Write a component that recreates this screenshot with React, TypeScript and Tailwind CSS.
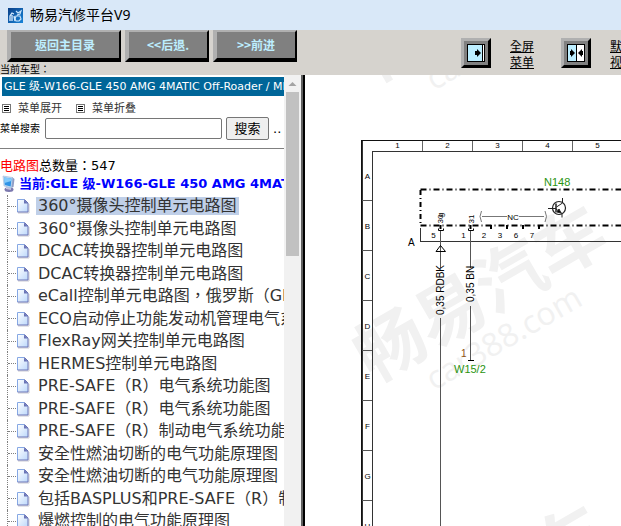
import React from "react";

const tree = [
  "360°摄像头控制单元电路图",
  "360°摄像头控制单元电路图",
  "DCAC转换器控制单元电路图",
  "DCAC转换器控制单元电路图",
  "eCall控制单元电路图，俄罗斯（GLE）",
  "ECO启动停止功能发动机管理电气系统功能图",
  "FlexRay网关控制单元电路图",
  "HERMES控制单元电路图",
  "PRE-SAFE（R）电气系统功能图",
  "PRE-SAFE（R）电气系统功能图",
  "PRE-SAFE（R）制动电气系统功能图",
  "安全性燃油切断的电气功能原理图",
  "安全性燃油切断的电气功能原理图",
  "包括BASPLUS和PRE-SAFE（R）制动",
  "爆燃控制的电气功能原理图",
];

function AppIcon() {
  return (
    <svg width="15" height="15" viewBox="0 0 15 15" aria-hidden="true">
      <defs>
        <linearGradient id="app" x1="0" y1="0" x2="1" y2="1">
          <stop offset="0" stopColor="#0a3f87" />
          <stop offset="1" stopColor="#1683d8" />
        </linearGradient>
      </defs>
      <rect width="15" height="15" fill="url(#app)" />
      <path d="M2 13V8l2-3 2 1M4 7v6M6 8l1 5" fill="none" stroke="#d8ecff" strokeWidth="1.3" />
      <path d="M8 3l2 2 3-2-1 3-3 1M8 8h4l1 3-2 2H8l-1-2z" fill="none" stroke="#c5e2fb" strokeWidth="1.2" />
    </svg>
  );
}

function ListIcon() {
  return (
    <svg width="9" height="9" viewBox="0 0 9 9" shapeRendering="crispEdges" aria-hidden="true">
      <rect x="0.5" y="0.5" width="8" height="8" fill="#fff" stroke="#777" />
      <path d="M2 2.5h5M2 4.5h5M2 6.5h5" stroke="#000" />
    </svg>
  );
}

function ComputerIcon() {
  return (
    <svg width="16" height="18" viewBox="0 0 16 18" className="shrink-0" aria-hidden="true">
      <ellipse cx="9" cy="14.500" rx="4.500" ry="2.500" fill="#7c79ae" />
      <path d="M6 11l5 1v3l-5-1z" fill="#c4c3de" />
      <path d="M12 2l2.500 2-1 8-3 1z" fill="#8f9cc4" />
      <path d="M3 1l9.500 1.500-1 10.500L4 11z" fill="#c3dcf2" stroke="#9fb9da" strokeWidth=".6" />
      <path d="M4 2.500l7.500 1-.8 8L4.800 10z" fill="#2f93e6" />
      <path d="M4 2.500l7.500 1-.2 2.500L4.400 8z" fill="#84cbfb" />
    </svg>
  );
}

function PageIcon() {
  return (
    <svg width="14" height="16" viewBox="0 0 14 16" className="shrink-0" aria-hidden="true">
      <defs>
        <linearGradient id="sheet" x1="0" y1="0" x2="1" y2="1">
          <stop offset="0" stopColor="#ffffff" />
          <stop offset="1" stopColor="#bcd8fb" />
        </linearGradient>
      </defs>
      <path d="M2 15h11V6" fill="none" stroke="#c9c9d2" />
      <path d="M1.500 1.500h7l3.500 3.500v9H1.500z" fill="url(#sheet)" />
      <path d="M1.500 14V1.500h7" fill="none" stroke="#86a8e4" />
      <path d="M8.500 1.500L12 5v9H1.500" fill="none" stroke="#6a74b6" />
      <path d="M8 1.500V5.500h4z" fill="#6a74b6" />
    </svg>
  );
}

function FullMenuIcon() {
  return (
    <svg width="18" height="18" viewBox="0 0 18 18" aria-hidden="true">
      <rect x="0.500" y="0.500" width="17" height="17" fill="#bdeeff" stroke="#000" />
      <path d="M16 1h1v16h-1z" fill="#fff" />
      <path d="M15.500 1v16" stroke="#000" />
      <path d="M8 7h2V5l4 4-4 4v-2H8z" fill="#000" />
    </svg>
  );
}

function SplitIcon() {
  return (
    <svg width="18" height="18" viewBox="0 0 18 18" aria-hidden="true">
      <rect x="0.500" y="0.500" width="17" height="17" fill="#fff" stroke="#000" />
      <path d="M1 1h8v16H1z" fill="#bdeeff" />
      <path d="M9.500 1v16" stroke="#000" />
      <path d="M3 7h1V5l4 4-4 4v-2H3zM16 7h-1V5l-4 4 4 4v-2h1z" fill="#000" />
    </svg>
  );
}

const navButton =
  "h-8 border-t-2 border-r-2 border-b-4 border-l-4 border-t-[#b0b0b0] border-l-[#b0b0b0] border-r-black border-b-black bg-[#808080] text-xs font-bold text-[#bdeeff]";
const iconButton =
  "flex size-[30px] shrink-0 items-center justify-center border-3 border-t-[#b0b0b0] border-l-[#b0b0b0] border-r-black border-b-black bg-[#808080]";

function Watermark({ y }: { y: number }) {
  return (
    <g transform={`translate(0 ${y})`} fill="#f1f1f1">
      <text transform="translate(373 384) rotate(-30)" fontSize="69" fontWeight="700" fontFamily="'Noto Sans CJK SC', sans-serif">
        畅易汽车
      </text>
      <text transform="translate(434 391) rotate(-30)" fontSize="32" fontFamily="'Open Sans', sans-serif">
        car388.com
      </text>
    </g>
  );
}

function Diagram() {
  const rows = ["A", "B", "C", "D", "E", "F", "G", "H", "I", "K"];
  const cols = [1, 2, 3, 4, 5, 6, 7, 8];
  return (
    <svg width="500" height="600" viewBox="305 75 500 600" className="block max-w-none" fontFamily="'Liberation Sans', Arial, sans-serif">
      <Watermark y={-300} />
      <Watermark y={0} />
      <Watermark y={300} />
      <g fill="none" shapeRendering="crispEdges">
        <path d="M362.500 660V140.500H800" stroke="#333" strokeWidth="1" />
        <path d="M361.500 660V140.500H800" stroke="#111" strokeWidth="1" />
        <path d="M372.500 660V151.500H800" stroke="#333" />
        {cols.map((c) => (
          <path key={c} d={`M${372.5 + c * 50} 141v10`} stroke="#666" />
        ))}
        {rows.map((r, i) => (
          <path key={r} d={`M362 ${200.5 + i * 50}h10`} stroke="#555" />
        ))}
      </g>
      <g fontSize="8" textAnchor="middle">
        {cols.map((c) => (
          <text key={c} x={347.5 + c * 50} y="148">{c}</text>
        ))}
        {rows.map((r, i) => (
          <text key={r} x="367.500" y={179 + i * 50}>{r}</text>
        ))}
      </g>
      <path d="M420.500 189.500H800" stroke="#000" strokeWidth="2" strokeDasharray="6 3 1 3" fill="none" />
      <path d="M420.500 225.500H800" stroke="#000" strokeWidth="2" strokeDasharray="6 3 1 3" fill="none" />
      <path d="M420.500 190v35" stroke="#000" strokeWidth="2" strokeDasharray="5 3 1 3" fill="none" />
      <path d="M420.500 228v13.500H800" stroke="#333" fill="none" shapeRendering="crispEdges" />
      <text x="408" y="246" fontSize="10">A</text>

      <g fill="none" stroke="#555" shapeRendering="crispEdges">
        <path d="M440.500 230v38M440.500 318v342M470.500 230v38M470.500 306v54" />
      </g>
      <g fill="none" stroke="#000">
        <path d="M438.500 228.500v2h5v-2M468.500 228.500v2h5v-2" />
        <path d="M440.500 225v4M470.500 225v4M491 225v4M507 225v4M523 225v4M539 225v4" strokeWidth="2" />
        <path d="M436 251.500L440.500 245.500L445.500 251.500Z" />
        <path d="M468 360.500h6" />
      </g>
      <g fontSize="8" textAnchor="middle">
        <text transform="translate(443 219) rotate(-90)">30</text>
        <text transform="translate(443 215) rotate(-90)">g</text>
        <text transform="translate(474 219) rotate(-90)">31</text>
        <text x="433.500" y="238">5</text>
        <text x="463.500" y="238">1</text>
        <text x="484" y="238">2</text>
        <text x="500" y="238">3</text>
        <text x="516" y="238">6</text>
        <text x="532" y="238">7</text>
        <text x="513" y="220">NC</text>
      </g>
      <g fill="none" stroke="#777">
        <path d="M481.500 211q-3 5.500 0 11M545 211q3 5.500 0 11" />
        <path d="M482 216.500h25M519 216.500h25" />
      </g>
      <g fill="none" stroke="#222">
        <circle cx="559" cy="208" r="6.500" strokeWidth="1.200" />
        <path d="M548 208.500h8M562.500 198v5l-6 4M556 209l6 4.500v4" />
        <path d="M556 203.500v9" strokeWidth="1.500" />
        <path d="M561 213l-4-1 2-3z" fill="#000" />
      </g>

      <g fontSize="10">
        <text transform="translate(444 315) rotate(-90)">0,35 RDBK</text>
        <text transform="translate(474 302) rotate(-90)">0,35 BN</text>
      </g>
      <g fontSize="11" fill="#2a9410">
        <text x="544" y="186">N148</text>
        <text x="454" y="373">W15/2</text>
        <text x="461" y="357" fontSize="10" fill="#8f5210">1</text>
      </g>
    </svg>
  );
}

export default function App() {
  return (
    <div className="flex h-screen flex-col overflow-hidden bg-white font-['DejaVu_Sans','Noto_Sans_CJK_TC',sans-serif] text-black">
      <header className="flex h-[30px] shrink-0 items-center gap-[7px] bg-[#d9e8f8] pl-2">
        <AppIcon />
        <h1 className="font-['Noto_Sans','Noto_Sans_CJK_SC',sans-serif] text-sm leading-5">畅易汽修平台V9</h1>
      </header>

      <div className="flex h-[45px] shrink-0 overflow-hidden bg-[#d6d3ce] font-['Noto_Sans_CJK_TC',sans-serif]">
        <div className="w-[461px] shrink-0">
          <div className="flex gap-1 pl-[7px]">
            <button type="button" className={navButton + " w-[114px]"}>返回主目录</button>
            <button type="button" className={navButton + " w-[84px]"}>&lt;&lt;后退.</button>
            <button type="button" className={navButton + " w-[84px]"}>&gt;&gt;前进</button>
          </div>
          <p className="text-[10px] leading-[13px]">当前车型：</p>
        </div>
        <div className="flex shrink-0 gap-[19px] pt-2">
          <button type="button" aria-label="全屏菜单" className={iconButton}><FullMenuIcon /></button>
          <a href="#menu" className="w-8 text-xs leading-4 underline">全屏<br />菜单</a>
          <button type="button" aria-label="默认视图" className={iconButton}><SplitIcon /></button>
          <a href="#view" className="w-8 text-xs leading-4 underline">默认<br />视图</a>
        </div>
      </div>

      <div className="flex min-h-0 flex-1">
        <aside className="flex w-[305px] shrink-0 border-r-2 border-black">
          <div className="min-w-0 flex-1 overflow-hidden whitespace-nowrap">
            <div className="mt-0.5 ml-0.5 h-[19px] overflow-hidden bg-[#006699] pl-0.5 text-[11px] leading-[19px] text-white">
              GLE 级-W166-GLE 450 AMG 4MATIC Off-Roader / ML
            </div>
            <div className="flex h-[21px] items-center gap-3.5 pt-1 pl-0.5 text-[11px] leading-4 text-[#333]">
              <a href="#expand" className="flex items-center gap-[7px]"><ListIcon />菜单展开</a>
              <a href="#collapse" className="flex items-center gap-[7px]"><ListIcon />菜单折叠</a>
            </div>
            <form className="flex h-[23px] items-center" onSubmit={(e) => e.preventDefault()}>
              <label htmlFor="q" className="w-[45px] text-[10px]">菜单搜索</label>
              <input id="q" type="text" className="h-[21px] w-[177px] rounded-xs border border-[#767676] bg-white px-1 text-[13px]" />
              <button type="submit" className="ml-1 h-[23px] w-[43px] rounded-xs border border-[#767676] bg-[#efefef] text-[13px] leading-5">搜索</button>
              <span className="ml-1 text-[13px]">..</span>
            </form>
            <hr className="mt-2 border-[#808080]" />
            <p className="mt-2 text-[13px] leading-[18px]"><span className="text-[#ff0000]">电路图</span>总数量：547</p>
            <div className="flex h-[18px] items-center gap-[3px] text-[13px] leading-[18px] font-bold text-[#0000ff]">
              <ComputerIcon />
              <span>当前:GLE 级-W166-GLE 450 AMG 4MATIC</span>
            </div>
            <ul className="mt-0.5 pl-[7px] text-base text-[#333]">
              {tree.map((name, i) => (
                <li key={i} className="flex h-[22px] items-center border-l border-dotted border-[#808080] even:h-[23px]">
                  <span className="w-2 shrink-0 border-t border-dotted border-[#808080]" />
                  <PageIcon />
                  <a href={"#doc" + i} className={i === 0 ? "ml-1.5 bg-[#bfcfe8] px-0.5 leading-[18px]" : "ml-1.5 px-0.5 leading-[18px]"}>
                    {name}
                  </a>
                </li>
              ))}
            </ul>
          </div>
          <div className="flex w-[17px] shrink-0 flex-col items-center bg-[#f1f1f1]">
            <svg width="17" height="17" viewBox="0 0 17 17" aria-hidden="true"><path d="M4.500 11h8l-4-4z" fill="#a3a3a3" /></svg>
            <div className="h-[164px] w-[13px] bg-[#c1c1c1]" />
          </div>
          <div className="w-0.5 shrink-0 bg-[#606060]" />
        </aside>
        <main className="min-w-0 flex-1 overflow-hidden bg-white">
          <Diagram />
        </main>
      </div>
    </div>
  );
}
